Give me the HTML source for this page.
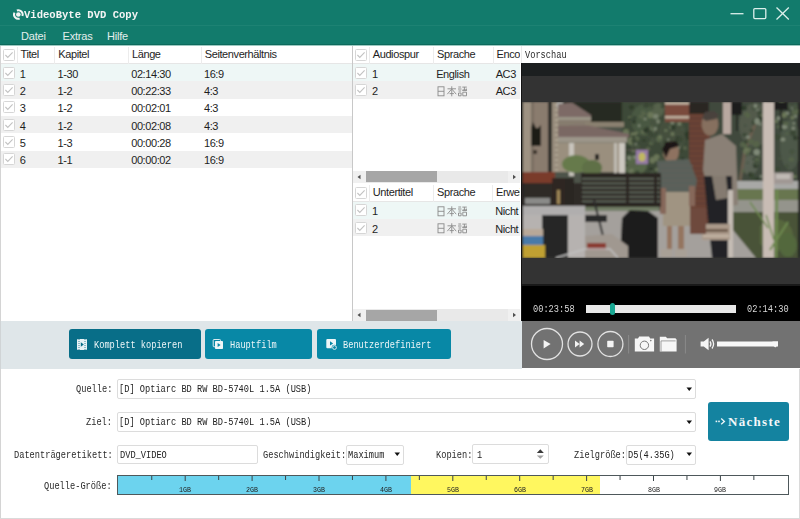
<!DOCTYPE html>
<html><head><meta charset="utf-8"><style>
html,body{margin:0;padding:0;}
body{width:800px;height:519px;position:relative;overflow:hidden;background:#fff;font-family:"Liberation Sans",sans-serif;}
.r{position:absolute;}
.t{position:absolute;white-space:pre;line-height:normal;}
svg{display:block;}
</style></head><body>
<div class="r" style="left:0px;top:0px;width:800px;height:25px;background:#127b6c;"></div>
<div class="r" style="left:0px;top:25px;width:800px;height:1px;background:#1d8273;"></div>
<div class="r" style="left:0px;top:26px;width:800px;height:18.5px;background:#127b6c;"></div>
<div class="r" style="left:0px;top:44px;width:800px;height:1px;background:#0c6a5c;"></div>
<div class="r" style="left:0px;top:45px;width:800px;height:1px;background:#9cc9c1;"></div>
<svg class="r" style="left:12px;top:9px" width="13" height="13" viewBox="0 0 13 13"><path d="M4.87 1.46 A4.3 4.3 0 0 1 10.39 6.97" fill="none" stroke="#f4f4f4" stroke-width="2"/><path d="M2.45 3.68 A4.3 4.3 0 0 0 7.68 9.6" fill="none" stroke="#f4f4f4" stroke-width="2"/><circle cx="6.35" cy="5.5" r="2.3" fill="#f4f4f4"/></svg>
<div class="t" style="left:24.30px;top:7.63px;font-family:'Liberation Mono',monospace;font-size:11.5px;color:#f4f4f4;transform:scaleX(0.9174);transform-origin:0 0;font-weight:700;">VideoByte DVD Copy</div>
<svg class="r" style="left:725px;top:0" width="75" height="25" viewBox="0 0 75 25"><line x1="5.5" y1="13.7" x2="18.5" y2="13.7" stroke="#dcefeb" stroke-width="1.3"/><rect x="28.8" y="8.6" width="12" height="10" rx="1" fill="none" stroke="#dcefeb" stroke-width="1.3"/><path d="M51.5 7.5 L63.8 19.5 M63.8 7.5 L51.5 19.5" stroke="#dcefeb" stroke-width="1.3"/></svg>
<div class="t" style="left:21.00px;top:29.84px;font-family:'Liberation Sans',sans-serif;font-size:11px;color:#e3eeec;letter-spacing:-0.2px;">Datei</div>
<div class="t" style="left:62.50px;top:29.84px;font-family:'Liberation Sans',sans-serif;font-size:11px;color:#e3eeec;letter-spacing:-0.2px;">Extras</div>
<div class="t" style="left:107.00px;top:29.84px;font-family:'Liberation Sans',sans-serif;font-size:11px;color:#e3eeec;letter-spacing:-0.2px;">Hilfe</div>
<div class="r" style="left:0px;top:46px;width:1px;height:473px;background:#d4d4d4;"></div>
<div class="r" style="left:1px;top:46px;width:351px;height:275px;overflow:hidden">
<div class="r" style="left:0px;top:17px;width:351px;height:1px;background:#e6e6e6;"></div>
<svg class="r" style="left:1.5px;top:3px" width="12" height="12" viewBox="0 0 12 12"><rect x="0.5" y="0.5" width="11" height="11" rx="1" fill="#fff" stroke="#d6d6d6"/><path d="M2.4 6.0 L4.8 8.4 L9.6 3.4" fill="none" stroke="#c2c2c2" stroke-width="1.1"/></svg>
<div class="r" style="left:15.5px;top:1px;width:1px;height:17px;background:#ececec;"></div>
<div class="t" style="left:19.50px;top:2.44px;font-family:'Liberation Sans',sans-serif;font-size:11px;color:#1e1e1e;letter-spacing:-0.4px;">Titel</div>
<div class="r" style="left:53.3px;top:1px;width:1px;height:17px;background:#ececec;"></div>
<div class="t" style="left:57.30px;top:2.44px;font-family:'Liberation Sans',sans-serif;font-size:11px;color:#1e1e1e;letter-spacing:-0.4px;">Kapitel</div>
<div class="r" style="left:127px;top:1px;width:1px;height:17px;background:#ececec;"></div>
<div class="t" style="left:131.00px;top:2.44px;font-family:'Liberation Sans',sans-serif;font-size:11px;color:#1e1e1e;letter-spacing:-0.4px;">Länge</div>
<div class="r" style="left:199.75px;top:1px;width:1px;height:17px;background:#ececec;"></div>
<div class="t" style="left:203.75px;top:2.44px;font-family:'Liberation Sans',sans-serif;font-size:11px;color:#1e1e1e;letter-spacing:-0.4px;">Seitenverhältnis</div>
<div class="r" style="left:0px;top:18.0px;width:351px;height:17.333px;background:#eef7f6;"></div>
<svg class="r" style="left:1.5px;top:20.7px" width="12" height="12" viewBox="0 0 12 12"><rect x="0.5" y="0.5" width="11" height="11" rx="1" fill="#fff" stroke="#d6d6d6"/><path d="M2.4 6.0 L4.8 8.4 L9.6 3.4" fill="none" stroke="#c2c2c2" stroke-width="1.1"/></svg>
<div class="t" style="left:18.70px;top:21.79px;font-family:'Liberation Sans',sans-serif;font-size:11px;color:#1e1e1e;letter-spacing:-0.4px;">1</div>
<div class="t" style="left:56.50px;top:21.79px;font-family:'Liberation Sans',sans-serif;font-size:11px;color:#1e1e1e;letter-spacing:-0.4px;">1-30</div>
<div class="t" style="left:130.20px;top:21.79px;font-family:'Liberation Sans',sans-serif;font-size:11px;color:#1e1e1e;letter-spacing:-0.4px;">02:14:30</div>
<div class="t" style="left:202.95px;top:21.79px;font-family:'Liberation Sans',sans-serif;font-size:11px;color:#1e1e1e;letter-spacing:-0.4px;">16:9</div>
<div class="r" style="left:0px;top:35.333px;width:351px;height:17.333px;background:#f0f0f0;"></div>
<svg class="r" style="left:1.5px;top:38.033px" width="12" height="12" viewBox="0 0 12 12"><rect x="0.5" y="0.5" width="11" height="11" rx="1" fill="#fff" stroke="#d6d6d6"/><path d="M2.4 6.0 L4.8 8.4 L9.6 3.4" fill="none" stroke="#c2c2c2" stroke-width="1.1"/></svg>
<div class="t" style="left:18.70px;top:39.12px;font-family:'Liberation Sans',sans-serif;font-size:11px;color:#1e1e1e;letter-spacing:-0.4px;">2</div>
<div class="t" style="left:56.50px;top:39.12px;font-family:'Liberation Sans',sans-serif;font-size:11px;color:#1e1e1e;letter-spacing:-0.4px;">1-2</div>
<div class="t" style="left:130.20px;top:39.12px;font-family:'Liberation Sans',sans-serif;font-size:11px;color:#1e1e1e;letter-spacing:-0.4px;">00:22:33</div>
<div class="t" style="left:202.95px;top:39.12px;font-family:'Liberation Sans',sans-serif;font-size:11px;color:#1e1e1e;letter-spacing:-0.4px;">4:3</div>
<div class="r" style="left:0px;top:52.666px;width:351px;height:17.333px;background:#ffffff;"></div>
<svg class="r" style="left:1.5px;top:55.366px" width="12" height="12" viewBox="0 0 12 12"><rect x="0.5" y="0.5" width="11" height="11" rx="1" fill="#fff" stroke="#d6d6d6"/><path d="M2.4 6.0 L4.8 8.4 L9.6 3.4" fill="none" stroke="#c2c2c2" stroke-width="1.1"/></svg>
<div class="t" style="left:18.70px;top:56.46px;font-family:'Liberation Sans',sans-serif;font-size:11px;color:#1e1e1e;letter-spacing:-0.4px;">3</div>
<div class="t" style="left:56.50px;top:56.46px;font-family:'Liberation Sans',sans-serif;font-size:11px;color:#1e1e1e;letter-spacing:-0.4px;">1-2</div>
<div class="t" style="left:130.20px;top:56.46px;font-family:'Liberation Sans',sans-serif;font-size:11px;color:#1e1e1e;letter-spacing:-0.4px;">00:02:01</div>
<div class="t" style="left:202.95px;top:56.46px;font-family:'Liberation Sans',sans-serif;font-size:11px;color:#1e1e1e;letter-spacing:-0.4px;">4:3</div>
<div class="r" style="left:0px;top:69.999px;width:351px;height:17.333px;background:#f0f0f0;"></div>
<svg class="r" style="left:1.5px;top:72.699px" width="12" height="12" viewBox="0 0 12 12"><rect x="0.5" y="0.5" width="11" height="11" rx="1" fill="#fff" stroke="#d6d6d6"/><path d="M2.4 6.0 L4.8 8.4 L9.6 3.4" fill="none" stroke="#c2c2c2" stroke-width="1.1"/></svg>
<div class="t" style="left:18.70px;top:73.79px;font-family:'Liberation Sans',sans-serif;font-size:11px;color:#1e1e1e;letter-spacing:-0.4px;">4</div>
<div class="t" style="left:56.50px;top:73.79px;font-family:'Liberation Sans',sans-serif;font-size:11px;color:#1e1e1e;letter-spacing:-0.4px;">1-2</div>
<div class="t" style="left:130.20px;top:73.79px;font-family:'Liberation Sans',sans-serif;font-size:11px;color:#1e1e1e;letter-spacing:-0.4px;">00:02:08</div>
<div class="t" style="left:202.95px;top:73.79px;font-family:'Liberation Sans',sans-serif;font-size:11px;color:#1e1e1e;letter-spacing:-0.4px;">4:3</div>
<div class="r" style="left:0px;top:87.332px;width:351px;height:17.333px;background:#ffffff;"></div>
<svg class="r" style="left:1.5px;top:90.032px" width="12" height="12" viewBox="0 0 12 12"><rect x="0.5" y="0.5" width="11" height="11" rx="1" fill="#fff" stroke="#d6d6d6"/><path d="M2.4 6.0 L4.8 8.4 L9.6 3.4" fill="none" stroke="#c2c2c2" stroke-width="1.1"/></svg>
<div class="t" style="left:18.70px;top:91.12px;font-family:'Liberation Sans',sans-serif;font-size:11px;color:#1e1e1e;letter-spacing:-0.4px;">5</div>
<div class="t" style="left:56.50px;top:91.12px;font-family:'Liberation Sans',sans-serif;font-size:11px;color:#1e1e1e;letter-spacing:-0.4px;">1-3</div>
<div class="t" style="left:130.20px;top:91.12px;font-family:'Liberation Sans',sans-serif;font-size:11px;color:#1e1e1e;letter-spacing:-0.4px;">00:00:28</div>
<div class="t" style="left:202.95px;top:91.12px;font-family:'Liberation Sans',sans-serif;font-size:11px;color:#1e1e1e;letter-spacing:-0.4px;">16:9</div>
<div class="r" style="left:0px;top:104.66499999999999px;width:351px;height:17.333px;background:#f0f0f0;"></div>
<svg class="r" style="left:1.5px;top:107.365px" width="12" height="12" viewBox="0 0 12 12"><rect x="0.5" y="0.5" width="11" height="11" rx="1" fill="#fff" stroke="#d6d6d6"/><path d="M2.4 6.0 L4.8 8.4 L9.6 3.4" fill="none" stroke="#c2c2c2" stroke-width="1.1"/></svg>
<div class="t" style="left:18.70px;top:108.46px;font-family:'Liberation Sans',sans-serif;font-size:11px;color:#1e1e1e;letter-spacing:-0.4px;">6</div>
<div class="t" style="left:56.50px;top:108.46px;font-family:'Liberation Sans',sans-serif;font-size:11px;color:#1e1e1e;letter-spacing:-0.4px;">1-1</div>
<div class="t" style="left:130.20px;top:108.46px;font-family:'Liberation Sans',sans-serif;font-size:11px;color:#1e1e1e;letter-spacing:-0.4px;">00:00:02</div>
<div class="t" style="left:202.95px;top:108.46px;font-family:'Liberation Sans',sans-serif;font-size:11px;color:#1e1e1e;letter-spacing:-0.4px;">16:9</div>
</div>
<div class="r" style="left:352px;top:46px;width:1px;height:275px;background:#c8c8c8;"></div>
<div class="r" style="left:353px;top:46px;width:168.5px;height:124.5px;overflow:hidden">
<div class="r" style="left:0px;top:17px;width:167px;height:1px;background:#e6e6e6;"></div>
<svg class="r" style="left:1.5px;top:3px" width="12" height="12" viewBox="0 0 12 12"><rect x="0.5" y="0.5" width="11" height="11" rx="1" fill="#fff" stroke="#d6d6d6"/><path d="M2.4 6.0 L4.8 8.4 L9.6 3.4" fill="none" stroke="#c2c2c2" stroke-width="1.1"/></svg>
<div class="r" style="left:15.75px;top:1px;width:1px;height:17px;background:#ececec;"></div>
<div class="t" style="left:19.75px;top:2.44px;font-family:'Liberation Sans',sans-serif;font-size:11px;color:#1e1e1e;letter-spacing:-0.4px;">Audiospur</div>
<div class="r" style="left:80px;top:1px;width:1px;height:17px;background:#ececec;"></div>
<div class="t" style="left:84.00px;top:2.44px;font-family:'Liberation Sans',sans-serif;font-size:11px;color:#1e1e1e;letter-spacing:-0.4px;">Sprache</div>
<div class="r" style="left:139.5px;top:1px;width:1px;height:17px;background:#ececec;"></div>
<div class="t" style="left:143.50px;top:2.44px;font-family:'Liberation Sans',sans-serif;font-size:11px;color:#1e1e1e;letter-spacing:-0.4px;">Encoding</div>
<div class="r" style="left:0px;top:18.0px;width:167px;height:17.333px;background:#eef7f6;"></div>
<svg class="r" style="left:1.5px;top:20.7px" width="12" height="12" viewBox="0 0 12 12"><rect x="0.5" y="0.5" width="11" height="11" rx="1" fill="#fff" stroke="#d6d6d6"/><path d="M2.4 6.0 L4.8 8.4 L9.6 3.4" fill="none" stroke="#c2c2c2" stroke-width="1.1"/></svg>
<div class="t" style="left:18.95px;top:21.79px;font-family:'Liberation Sans',sans-serif;font-size:11px;color:#1e1e1e;letter-spacing:-0.4px;">1</div>
<div class="t" style="left:83.20px;top:21.79px;font-family:'Liberation Sans',sans-serif;font-size:11px;color:#1e1e1e;letter-spacing:-0.4px;">English</div>
<div class="t" style="left:142.70px;top:21.79px;font-family:'Liberation Sans',sans-serif;font-size:11px;color:#1e1e1e;letter-spacing:-0.4px;">AC3</div>
<div class="r" style="left:0px;top:35.333px;width:167px;height:17.333px;background:#f0f0f0;"></div>
<svg class="r" style="left:1.5px;top:38.033px" width="12" height="12" viewBox="0 0 12 12"><rect x="0.5" y="0.5" width="11" height="11" rx="1" fill="#fff" stroke="#d6d6d6"/><path d="M2.4 6.0 L4.8 8.4 L9.6 3.4" fill="none" stroke="#c2c2c2" stroke-width="1.1"/></svg>
<div class="t" style="left:18.95px;top:39.12px;font-family:'Liberation Sans',sans-serif;font-size:11px;color:#1e1e1e;letter-spacing:-0.4px;">2</div>
<svg class="r" style="left:83.50px;top:39.93px" width="31" height="11" viewBox="0 0 31 11"><g fill="none" stroke="#8a8a8a" stroke-width="0.9"><rect x="1" y="0.8" width="6" height="9"/><path d="M1 5.3 h6"/><path d="M10.5 2.8 h8.5 M14.75 0.3 v10 M14.5 3.2 L10.3 8.2 M15 3.2 L19.2 8.2 M12.6 7.6 h4.3"/><path d="M21.3 1 h2.8 M21 3 h3.5 M21.5 5 h2.6 M21.5 7 h2.6 M21.5 7 v2.8 h2.6 v-2.8 M25.3 1.1 h4.5 M27.4 1.1 v3 M25.7 4.1 h3.8 v-0.2 M29.3 2.5 v1.8 M25.2 4.3 h4.8 M25.8 6.2 h3.7 v3.6 h-3.7 Z"/></g></svg>
<div class="t" style="left:142.70px;top:39.12px;font-family:'Liberation Sans',sans-serif;font-size:11px;color:#1e1e1e;letter-spacing:-0.4px;">AC3</div>
</div>
<div class="r" style="left:353px;top:170.5px;width:168px;height:12px;background:#e9e9e9;"></div>
<div class="r" style="left:353px;top:170.5px;width:12.5px;height:12px;background:#f0f0f0;"></div>
<div class="r" style="left:508px;top:170.5px;width:12.5px;height:12px;background:#f0f0f0;"></div>
<div class="r" style="left:366px;top:171.0px;width:71px;height:11px;background:#a6a6a6;"></div>
<svg class="r" style="left:353px;top:170.5px" width="168" height="12"><path d="M4.5 6 L7.5 3.8 L7.5 8.2 Z" fill="#505050"/><path d="M163 6 L160 3.8 L160 8.2 Z" fill="#505050"/></svg>
<div class="r" style="left:353px;top:182.5px;width:168.5px;height:126.5px;overflow:hidden">
<div class="r" style="left:0px;top:18px;width:167px;height:1px;background:#e6e6e6;"></div>
<svg class="r" style="left:1.5px;top:4px" width="12" height="12" viewBox="0 0 12 12"><rect x="0.5" y="0.5" width="11" height="11" rx="1" fill="#fff" stroke="#d6d6d6"/><path d="M2.4 6.0 L4.8 8.4 L9.6 3.4" fill="none" stroke="#c2c2c2" stroke-width="1.1"/></svg>
<div class="r" style="left:15.75px;top:2px;width:1px;height:17px;background:#ececec;"></div>
<div class="t" style="left:19.75px;top:3.44px;font-family:'Liberation Sans',sans-serif;font-size:11px;color:#1e1e1e;letter-spacing:-0.4px;">Untertitel</div>
<div class="r" style="left:80px;top:2px;width:1px;height:17px;background:#ececec;"></div>
<div class="t" style="left:84.00px;top:3.44px;font-family:'Liberation Sans',sans-serif;font-size:11px;color:#1e1e1e;letter-spacing:-0.4px;">Sprache</div>
<div class="r" style="left:139px;top:2px;width:1px;height:17px;background:#ececec;"></div>
<div class="t" style="left:143.00px;top:3.44px;font-family:'Liberation Sans',sans-serif;font-size:11px;color:#1e1e1e;letter-spacing:-0.4px;">Erweitert</div>
<div class="r" style="left:0px;top:19.0px;width:167px;height:17.333px;background:#eef7f6;"></div>
<svg class="r" style="left:1.5px;top:21.7px" width="12" height="12" viewBox="0 0 12 12"><rect x="0.5" y="0.5" width="11" height="11" rx="1" fill="#fff" stroke="#d6d6d6"/><path d="M2.4 6.0 L4.8 8.4 L9.6 3.4" fill="none" stroke="#c2c2c2" stroke-width="1.1"/></svg>
<div class="t" style="left:18.95px;top:22.79px;font-family:'Liberation Sans',sans-serif;font-size:11px;color:#1e1e1e;letter-spacing:-0.4px;">1</div>
<svg class="r" style="left:83.50px;top:23.60px" width="31" height="11" viewBox="0 0 31 11"><g fill="none" stroke="#8a8a8a" stroke-width="0.9"><rect x="1" y="0.8" width="6" height="9"/><path d="M1 5.3 h6"/><path d="M10.5 2.8 h8.5 M14.75 0.3 v10 M14.5 3.2 L10.3 8.2 M15 3.2 L19.2 8.2 M12.6 7.6 h4.3"/><path d="M21.3 1 h2.8 M21 3 h3.5 M21.5 5 h2.6 M21.5 7 h2.6 M21.5 7 v2.8 h2.6 v-2.8 M25.3 1.1 h4.5 M27.4 1.1 v3 M25.7 4.1 h3.8 v-0.2 M29.3 2.5 v1.8 M25.2 4.3 h4.8 M25.8 6.2 h3.7 v3.6 h-3.7 Z"/></g></svg>
<div class="t" style="left:142.20px;top:22.79px;font-family:'Liberation Sans',sans-serif;font-size:11px;color:#1e1e1e;letter-spacing:-0.4px;">Nicht</div>
<div class="r" style="left:0px;top:36.333px;width:167px;height:17.333px;background:#f0f0f0;"></div>
<svg class="r" style="left:1.5px;top:39.033px" width="12" height="12" viewBox="0 0 12 12"><rect x="0.5" y="0.5" width="11" height="11" rx="1" fill="#fff" stroke="#d6d6d6"/><path d="M2.4 6.0 L4.8 8.4 L9.6 3.4" fill="none" stroke="#c2c2c2" stroke-width="1.1"/></svg>
<div class="t" style="left:18.95px;top:40.12px;font-family:'Liberation Sans',sans-serif;font-size:11px;color:#1e1e1e;letter-spacing:-0.4px;">2</div>
<svg class="r" style="left:83.50px;top:40.93px" width="31" height="11" viewBox="0 0 31 11"><g fill="none" stroke="#8a8a8a" stroke-width="0.9"><rect x="1" y="0.8" width="6" height="9"/><path d="M1 5.3 h6"/><path d="M10.5 2.8 h8.5 M14.75 0.3 v10 M14.5 3.2 L10.3 8.2 M15 3.2 L19.2 8.2 M12.6 7.6 h4.3"/><path d="M21.3 1 h2.8 M21 3 h3.5 M21.5 5 h2.6 M21.5 7 h2.6 M21.5 7 v2.8 h2.6 v-2.8 M25.3 1.1 h4.5 M27.4 1.1 v3 M25.7 4.1 h3.8 v-0.2 M29.3 2.5 v1.8 M25.2 4.3 h4.8 M25.8 6.2 h3.7 v3.6 h-3.7 Z"/></g></svg>
<div class="t" style="left:142.20px;top:40.12px;font-family:'Liberation Sans',sans-serif;font-size:11px;color:#1e1e1e;letter-spacing:-0.4px;">Nicht</div>
</div>
<div class="r" style="left:353px;top:309px;width:168px;height:12px;background:#e9e9e9;"></div>
<div class="r" style="left:353px;top:309px;width:12.5px;height:12px;background:#f0f0f0;"></div>
<div class="r" style="left:508px;top:309px;width:12.5px;height:12px;background:#f0f0f0;"></div>
<div class="r" style="left:366px;top:309.5px;width:71px;height:11px;background:#a6a6a6;"></div>
<svg class="r" style="left:353px;top:309px" width="168" height="12"><path d="M4.5 6 L7.5 3.8 L7.5 8.2 Z" fill="#505050"/><path d="M163 6 L160 3.8 L160 8.2 Z" fill="#505050"/></svg>
<div class="r" style="left:520px;top:46px;width:1px;height:275px;background:#ffffff;"></div>
<div class="r" style="left:521px;top:46px;width:1px;height:17px;background:#ebebeb;"></div>
<div class="r" style="left:521px;top:63px;width:1px;height:258px;background:#141414;"></div>
<div class="t" style="left:525.30px;top:48.54px;font-family:'Liberation Mono',monospace;font-size:11px;color:#2a2a2a;transform:scaleX(0.7879);transform-origin:0 0;">Vorschau</div>
<div class="r" style="left:522px;top:63px;width:278px;height:13px;background:#1c1f20;"></div>
<div class="r" style="left:522px;top:76px;width:278px;height:26px;background:#333333;"></div>
<svg class="r" style="left:522px;top:102px" width="278" height="156" viewBox="522 102 278 156"><defs><filter id="bl" x="522" y="102" width="278" height="156" filterUnits="userSpaceOnUse"><feGaussianBlur stdDeviation="0.8"/></filter></defs><rect x="522" y="102" width="278" height="156" fill="#3a3a36"/><g filter="url(#bl)"><rect x="522" y="102" width="278" height="156" fill="#4e5248" /><rect x="523" y="102" width="35" height="70" fill="#8a7c6e" /><rect x="523" y="102" width="8" height="70" fill="#9e9282" /><rect x="531" y="102" width="3" height="70" fill="#7a6e62" /><rect x="548" y="102" width="4" height="70" fill="#2c2a27" /><rect x="552" y="102" width="6" height="70" fill="#968b7c" /><rect x="555" y="104" width="3" height="2" fill="#b0a694" /><rect x="555" y="109" width="3" height="2" fill="#b0a694" /><rect x="555" y="114" width="3" height="2" fill="#b0a694" /><rect x="555" y="119" width="3" height="2" fill="#b0a694" /><rect x="555" y="124" width="3" height="2" fill="#b0a694" /><rect x="555" y="129" width="3" height="2" fill="#b0a694" /><rect x="555" y="134" width="3" height="2" fill="#b0a694" /><rect x="555" y="139" width="3" height="2" fill="#b0a694" /><rect x="555" y="144" width="3" height="2" fill="#b0a694" /><rect x="555" y="149" width="3" height="2" fill="#b0a694" /><rect x="555" y="154" width="3" height="2" fill="#b0a694" /><rect x="555" y="159" width="3" height="2" fill="#b0a694" /><rect x="555" y="164" width="3" height="2" fill="#b0a694" /><rect x="555" y="169" width="3" height="2" fill="#b0a694" /><polygon points="531,128 533,122 536,128 538,128 541,125 541,146 531,146" fill="#1e1a18" /><rect x="533" y="150" width="4" height="4" fill="#3a302a" /><rect x="558" y="102" width="67" height="24" fill="#262a24" /><rect x="622" y="102" width="68" height="78" fill="#3e4a38" /><ellipse cx="645" cy="120" rx="14" ry="16" fill="#4a5842" /><ellipse cx="672" cy="135" rx="14" ry="18" fill="#44503e" /><ellipse cx="635" cy="165" rx="12" ry="10" fill="#566648" /><ellipse cx="658" cy="110" rx="6" ry="7" fill="#56624c" /><ellipse cx="646.1" cy="114.3" rx="2.5" ry="1.8" fill="#465240" /><ellipse cx="631.8" cy="146.7" rx="3.0" ry="2.4" fill="#2e3a2a" /><ellipse cx="652.9" cy="108.2" rx="1.4" ry="1.3" fill="#465240" /><ellipse cx="633.7" cy="119.7" rx="2.5" ry="2.9" fill="#465240" /><ellipse cx="662.3" cy="106.7" rx="1.6" ry="1.6" fill="#3a4634" /><ellipse cx="644.0" cy="113.8" rx="1.4" ry="1.2" fill="#7a8470" /><ellipse cx="637.2" cy="146.6" rx="2.5" ry="2.2" fill="#465240" /><ellipse cx="670.2" cy="145.3" rx="2.4" ry="2.3" fill="#465240" /><ellipse cx="652.5" cy="126.6" rx="2.4" ry="2.2" fill="#56644a" /><ellipse cx="641.4" cy="116.5" rx="2.8" ry="2.0" fill="#56644a" /><ellipse cx="658.6" cy="168.6" rx="2.7" ry="2.2" fill="#2e3a2a" /><ellipse cx="633.3" cy="134.4" rx="2.7" ry="2.1" fill="#6a7658" /><ellipse cx="652.1" cy="175.2" rx="1.4" ry="1.3" fill="#56644a" /><ellipse cx="647.1" cy="129.3" rx="2.2" ry="2.4" fill="#2e3a2a" /><ellipse cx="678.1" cy="173.9" rx="2.1" ry="2.2" fill="#2e3a2a" /><ellipse cx="671.3" cy="126.2" rx="2.4" ry="2.5" fill="#6a7658" /><ellipse cx="643.6" cy="131.9" rx="2.5" ry="1.8" fill="#6a7658" /><ellipse cx="648.0" cy="148.8" rx="2.2" ry="1.8" fill="#56644a" /><ellipse cx="634.0" cy="121.6" rx="2.0" ry="2.3" fill="#2e3a2a" /><ellipse cx="636.3" cy="133.1" rx="1.8" ry="1.3" fill="#6a7658" /><ellipse cx="679.6" cy="123.9" rx="2.0" ry="1.8" fill="#6a7658" /><ellipse cx="685.4" cy="114.3" rx="1.6" ry="1.3" fill="#3a4634" /><ellipse cx="626.7" cy="165.3" rx="1.6" ry="1.3" fill="#3a4634" /><ellipse cx="652.0" cy="130.7" rx="2.3" ry="2.7" fill="#7a8470" /><ellipse cx="679.3" cy="174.3" rx="2.5" ry="2.7" fill="#6a7658" /><ellipse cx="681.8" cy="161.5" rx="2.9" ry="3.2" fill="#6a7658" /><ellipse cx="650.7" cy="132.6" rx="2.2" ry="1.9" fill="#3a4634" /><ellipse cx="630.2" cy="118.7" rx="1.5" ry="1.3" fill="#2e3a2a" /><ellipse cx="632.3" cy="145.5" rx="2.3" ry="2.7" fill="#465240" /><ellipse cx="627.6" cy="168.6" rx="2.4" ry="1.9" fill="#56644a" /><ellipse cx="685.2" cy="148.2" rx="2.1" ry="1.6" fill="#6a7658" /><ellipse cx="687.6" cy="137.9" rx="2.2" ry="1.6" fill="#2e3a2a" /><ellipse cx="672.5" cy="158.5" rx="2.2" ry="2.3" fill="#465240" /><ellipse cx="627.4" cy="174.3" rx="2.3" ry="1.7" fill="#465240" /><ellipse cx="682.7" cy="159.9" rx="1.8" ry="1.8" fill="#2e3a2a" /><ellipse cx="669.2" cy="122.6" rx="1.9" ry="1.5" fill="#3a4634" /><ellipse cx="659.0" cy="161.4" rx="1.9" ry="1.5" fill="#3a4634" /><ellipse cx="676.0" cy="164.4" rx="2.7" ry="2.2" fill="#465240" /><ellipse cx="656.6" cy="157.8" rx="3.2" ry="3.5" fill="#6a7658" /><ellipse cx="642.1" cy="154.9" rx="3.1" ry="2.9" fill="#7a8470" /><ellipse cx="687.3" cy="174.6" rx="1.9" ry="1.6" fill="#3a4634" /><ellipse cx="655.1" cy="128.3" rx="2.2" ry="2.6" fill="#465240" /><ellipse cx="678.1" cy="139.0" rx="2.5" ry="2.8" fill="#2e3a2a" /><ellipse cx="677.7" cy="112.0" rx="2.0" ry="2.1" fill="#3a4634" /><ellipse cx="655.6" cy="116.4" rx="2.8" ry="2.4" fill="#7a8470" /><ellipse cx="650.5" cy="133.1" rx="3.1" ry="3.3" fill="#3a4634" /><ellipse cx="687.6" cy="105.1" rx="2.4" ry="2.2" fill="#7a8470" /><ellipse cx="635.1" cy="165.0" rx="3.2" ry="3.3" fill="#56644a" /><ellipse cx="635.7" cy="144.1" rx="1.2" ry="1.4" fill="#7a8470" /><ellipse cx="666.3" cy="142.5" rx="3.1" ry="2.8" fill="#3a4634" /><ellipse cx="677.2" cy="118.8" rx="1.7" ry="1.4" fill="#3a4634" /><ellipse cx="673.3" cy="127.4" rx="2.3" ry="2.6" fill="#2e3a2a" /><ellipse cx="682.4" cy="129.5" rx="2.1" ry="2.1" fill="#465240" /><ellipse cx="652.1" cy="171.8" rx="2.2" ry="2.1" fill="#465240" /><ellipse cx="657.7" cy="168.5" rx="2.8" ry="2.8" fill="#3a4634" /><ellipse cx="636.7" cy="138.5" rx="2.7" ry="2.6" fill="#56644a" /><ellipse cx="668.3" cy="142.8" rx="2.2" ry="2.4" fill="#465240" /><ellipse cx="629.5" cy="117.3" rx="1.3" ry="1.0" fill="#6a7658" /><ellipse cx="660.8" cy="160.0" rx="3.0" ry="2.8" fill="#465240" /><ellipse cx="686.3" cy="148.5" rx="1.6" ry="1.3" fill="#465240" /><ellipse cx="659.1" cy="138.9" rx="3.1" ry="3.2" fill="#56644a" /><ellipse cx="683.2" cy="170.0" rx="1.6" ry="1.5" fill="#6a7658" /><ellipse cx="633.5" cy="136.2" rx="1.3" ry="1.1" fill="#2e3a2a" /><ellipse cx="639.2" cy="125.7" rx="1.4" ry="1.6" fill="#7a8470" /><ellipse cx="665.9" cy="130.5" rx="1.7" ry="1.3" fill="#6a7658" /><ellipse cx="639.6" cy="174.4" rx="2.0" ry="1.9" fill="#7a8470" /><ellipse cx="677.6" cy="115.1" rx="2.1" ry="2.0" fill="#56644a" /><ellipse cx="652.1" cy="129.7" rx="1.4" ry="1.2" fill="#56644a" /><ellipse cx="660.4" cy="136.0" rx="1.2" ry="1.1" fill="#465240" /><ellipse cx="644.3" cy="175.1" rx="1.4" ry="1.7" fill="#3a4634" /><ellipse cx="686.2" cy="110.9" rx="1.7" ry="1.2" fill="#3a4634" /><ellipse cx="642.8" cy="112.7" rx="2.0" ry="2.4" fill="#56644a" /><ellipse cx="651.2" cy="143.2" rx="2.2" ry="2.1" fill="#56644a" /><ellipse cx="631.5" cy="107.3" rx="2.6" ry="2.4" fill="#2e3a2a" /><ellipse cx="642.7" cy="104.3" rx="1.4" ry="1.1" fill="#465240" /><ellipse cx="679.1" cy="108.0" rx="2.9" ry="2.7" fill="#56644a" /><ellipse cx="687.6" cy="134.3" rx="3.0" ry="3.1" fill="#2e3a2a" /><ellipse cx="658.7" cy="120.9" rx="1.4" ry="1.1" fill="#2e3a2a" /><ellipse cx="637.2" cy="172.9" rx="2.5" ry="2.4" fill="#3a4634" /><ellipse cx="644.0" cy="140.5" rx="1.6" ry="1.4" fill="#2e3a2a" /><ellipse cx="687.7" cy="105.8" rx="1.2" ry="1.2" fill="#3a4634" /><ellipse cx="657.9" cy="121.4" rx="2.1" ry="2.2" fill="#7a8470" /><ellipse cx="652.8" cy="140.1" rx="2.9" ry="2.6" fill="#465240" /><ellipse cx="645.1" cy="119.1" rx="1.7" ry="1.3" fill="#7a8470" /><ellipse cx="671.2" cy="113.5" rx="3.2" ry="3.8" fill="#3a4634" /><ellipse cx="626.9" cy="149.9" rx="3.0" ry="2.7" fill="#2e3a2a" /><ellipse cx="631.2" cy="166.1" rx="2.9" ry="3.0" fill="#56644a" /><ellipse cx="663.1" cy="155.0" rx="1.3" ry="1.0" fill="#56644a" /><ellipse cx="653.6" cy="122.7" rx="3.1" ry="3.7" fill="#465240" /><ellipse cx="646.1" cy="105.6" rx="3.0" ry="2.4" fill="#3a4634" /><ellipse cx="626.1" cy="131.6" rx="2.1" ry="2.0" fill="#3a4634" /><ellipse cx="641.4" cy="161.2" rx="1.4" ry="1.5" fill="#3a4634" /><ellipse cx="650.8" cy="106.1" rx="1.2" ry="1.1" fill="#3a4634" /><ellipse cx="631.2" cy="174.8" rx="2.9" ry="2.3" fill="#7a8470" /><ellipse cx="674.6" cy="147.7" rx="2.7" ry="2.9" fill="#6a7658" /><ellipse cx="635.3" cy="157.3" rx="2.5" ry="1.8" fill="#7a8470" /><ellipse cx="681.3" cy="150.0" rx="2.7" ry="3.0" fill="#3a4634" /><ellipse cx="682.4" cy="159.5" rx="2.3" ry="2.6" fill="#2e3a2a" /><ellipse cx="677.2" cy="146.8" rx="3.0" ry="3.1" fill="#7a8470" /><ellipse cx="665.9" cy="109.4" rx="1.3" ry="1.3" fill="#2e3a2a" /><ellipse cx="649.4" cy="136.9" rx="1.3" ry="0.9" fill="#465240" /><ellipse cx="668.2" cy="139.7" rx="1.2" ry="1.3" fill="#7a8470" /><ellipse cx="683.8" cy="170.3" rx="1.4" ry="1.3" fill="#7a8470" /><ellipse cx="671.7" cy="121.9" rx="1.3" ry="1.1" fill="#7a8470" /><ellipse cx="672.9" cy="120.3" rx="2.5" ry="2.3" fill="#6a7658" /><ellipse cx="630.8" cy="171.3" rx="1.8" ry="1.3" fill="#7a8470" /><ellipse cx="665.9" cy="108.8" rx="1.5" ry="1.2" fill="#7a8470" /><ellipse cx="669.0" cy="149.6" rx="1.5" ry="1.4" fill="#6a7658" /><ellipse cx="642.7" cy="153.4" rx="2.6" ry="2.7" fill="#56644a" /><ellipse cx="669.9" cy="124.4" rx="2.1" ry="2.3" fill="#465240" /><ellipse cx="638.4" cy="176.4" rx="3.1" ry="2.2" fill="#6a7658" /><ellipse cx="630.7" cy="141.0" rx="3.2" ry="3.8" fill="#6a7658" /><ellipse cx="639.0" cy="173.9" rx="1.6" ry="1.6" fill="#3a4634" /><ellipse cx="672.3" cy="122.6" rx="1.9" ry="1.9" fill="#7a8470" /><ellipse cx="657.5" cy="169.5" rx="2.6" ry="2.1" fill="#6a7658" /><ellipse cx="650.4" cy="114.9" rx="3.1" ry="3.2" fill="#6a7658" /><ellipse cx="644.7" cy="113.6" rx="1.9" ry="1.6" fill="#56644a" /><ellipse cx="626.1" cy="159.3" rx="2.9" ry="2.2" fill="#3a4634" /><ellipse cx="670.2" cy="170.6" rx="1.8" ry="1.6" fill="#6a7658" /><ellipse cx="650.2" cy="168.2" rx="1.4" ry="1.6" fill="#56644a" /><ellipse cx="679.0" cy="124.0" rx="1.3" ry="1.3" fill="#7a8470" /><ellipse cx="684.0" cy="121.7" rx="1.7" ry="1.7" fill="#3a4634" /><ellipse cx="673.9" cy="161.9" rx="2.1" ry="1.5" fill="#7a8470" /><ellipse cx="650.8" cy="168.7" rx="2.3" ry="1.9" fill="#2e3a2a" /><ellipse cx="629.1" cy="157.9" rx="2.1" ry="2.3" fill="#7a8470" /><ellipse cx="679.9" cy="139.4" rx="3.0" ry="2.9" fill="#3a4634" /><ellipse cx="655.3" cy="128.8" rx="1.8" ry="1.9" fill="#7a8470" /><ellipse cx="642.1" cy="152.2" rx="1.8" ry="1.8" fill="#6a7658" /><ellipse cx="633.4" cy="151.2" rx="1.4" ry="1.3" fill="#6a7658" /><ellipse cx="660.1" cy="137.0" rx="1.9" ry="2.0" fill="#6a7658" /><ellipse cx="634.7" cy="117.4" rx="1.4" ry="1.2" fill="#2e3a2a" /><ellipse cx="645.8" cy="130.6" rx="2.8" ry="2.3" fill="#2e3a2a" /><ellipse cx="672.5" cy="134.0" rx="2.0" ry="2.0" fill="#6a7658" /><ellipse cx="642.8" cy="159.4" rx="2.2" ry="2.2" fill="#56644a" /><ellipse cx="633.8" cy="140.8" rx="2.5" ry="2.8" fill="#3a4634" /><ellipse cx="631.7" cy="170.3" rx="2.0" ry="2.0" fill="#6a7658" /><ellipse cx="685.1" cy="166.7" rx="2.9" ry="2.1" fill="#2e3a2a" /><ellipse cx="652.4" cy="160.3" rx="2.8" ry="3.3" fill="#6a7658" /><ellipse cx="626.0" cy="132.4" rx="3.1" ry="3.4" fill="#6a7658" /><ellipse cx="686.3" cy="121.6" rx="1.4" ry="1.1" fill="#465240" /><rect x="557" y="102" width="6" height="6" fill="#b8b8b4" /><polygon points="558,104 572,102.5 591,115 591,118 558,118" fill="#7d6a66" /><rect x="558" y="117" width="33" height="3" fill="#9a9486" /><rect x="558" y="120" width="33" height="6" fill="#867c6e" /><rect x="585" y="122" width="39" height="5" fill="#8a8070" /><polygon points="558,126 588,125.5 629,134 629,137.5 558,137.5" fill="#7a6764" /><rect x="558" y="137" width="69" height="5.5" fill="#9c968a" /><rect x="558" y="142.5" width="67" height="29.5" fill="#9a8f7e" /><rect x="569" y="143" width="5" height="33" fill="#c8c4bc" /><rect x="614" y="143" width="3" height="33" fill="#c0bcb4" /><rect x="619" y="143" width="6" height="33" fill="#ccc8c0" /><ellipse cx="576" cy="164" rx="14" ry="9" fill="#667a4c" /><ellipse cx="592" cy="168" rx="10" ry="8" fill="#5e7046" /><rect x="595" y="154" width="4" height="6" fill="#1e1e1c" /><polyline points="625,150 650,150" fill="none" stroke="#6a6058" stroke-width="1" /><rect x="636" y="150" width="12" height="14" fill="#957aa6" /><ellipse cx="642" cy="157" rx="3.5" ry="4.5" fill="#c0b860" /><rect x="688" y="102" width="36" height="14" fill="#2a2824" /><rect x="665" y="102" width="24" height="20" fill="#7a4c3e" /><rect x="665" y="102" width="24" height="2.5" fill="#c8baa8" /><rect x="665" y="116" width="24" height="2.5" fill="#c0b2a0" /><rect x="709" y="102" width="89" height="81" fill="#404a3e" /><ellipse cx="755" cy="125" rx="16" ry="22" fill="#525a4c" /><ellipse cx="790" cy="145" rx="10" ry="25" fill="#4e5848" /><ellipse cx="725" cy="160" rx="10" ry="15" fill="#4a5444" /><ellipse cx="750" cy="165" rx="8" ry="10" fill="#5a6254" /><polyline points="740,181 745,150 756,122" fill="none" stroke="#6a5e50" stroke-width="3" /><ellipse cx="795.5" cy="111.4" rx="2.9" ry="3.0" fill="#6a7658" /><ellipse cx="747.6" cy="162.8" rx="1.2" ry="0.9" fill="#465240" /><ellipse cx="792.7" cy="152.7" rx="1.8" ry="1.4" fill="#56644a" /><ellipse cx="771.5" cy="136.7" rx="2.7" ry="2.0" fill="#56644a" /><ellipse cx="771.3" cy="147.9" rx="2.0" ry="1.6" fill="#465240" /><ellipse cx="743.1" cy="144.4" rx="3.2" ry="2.7" fill="#56644a" /><ellipse cx="777.8" cy="171.1" rx="2.2" ry="1.8" fill="#3a4634" /><ellipse cx="744.6" cy="134.7" rx="2.5" ry="1.8" fill="#3a4634" /><ellipse cx="769.9" cy="154.9" rx="2.0" ry="1.7" fill="#808a78" /><ellipse cx="765.9" cy="131.5" rx="2.2" ry="2.3" fill="#808a78" /><ellipse cx="765.7" cy="155.6" rx="1.6" ry="1.8" fill="#808a78" /><ellipse cx="788.6" cy="108.2" rx="2.2" ry="1.8" fill="#3a4634" /><ellipse cx="755.5" cy="120.1" rx="2.7" ry="2.3" fill="#465240" /><ellipse cx="769.8" cy="117.4" rx="1.6" ry="1.5" fill="#808a78" /><ellipse cx="746.0" cy="148.8" rx="3.0" ry="2.2" fill="#2e3a2a" /><ellipse cx="795.6" cy="113.9" rx="1.3" ry="1.0" fill="#6a7658" /><ellipse cx="767.3" cy="157.8" rx="1.8" ry="1.4" fill="#2e3a2a" /><ellipse cx="793.3" cy="128.4" rx="1.6" ry="1.8" fill="#808a78" /><ellipse cx="768.3" cy="127.0" rx="2.7" ry="3.0" fill="#56644a" /><ellipse cx="766.9" cy="111.4" rx="1.4" ry="1.0" fill="#6a7658" /><ellipse cx="794.6" cy="112.5" rx="3.1" ry="2.5" fill="#56644a" /><ellipse cx="784.5" cy="126.8" rx="2.8" ry="2.1" fill="#808a78" /><ellipse cx="768.6" cy="131.7" rx="3.0" ry="2.4" fill="#56644a" /><ellipse cx="782.8" cy="139.5" rx="2.5" ry="2.0" fill="#808a78" /><ellipse cx="784.4" cy="106.1" rx="1.3" ry="0.9" fill="#2e3a2a" /><ellipse cx="756.9" cy="160.5" rx="3.0" ry="2.6" fill="#56644a" /><ellipse cx="761.1" cy="176.4" rx="1.3" ry="1.4" fill="#808a78" /><ellipse cx="760.1" cy="124.2" rx="1.2" ry="1.3" fill="#808a78" /><ellipse cx="794.1" cy="108.0" rx="2.9" ry="2.1" fill="#808a78" /><ellipse cx="794.7" cy="176.5" rx="2.0" ry="1.6" fill="#6a7658" /><ellipse cx="787.0" cy="113.2" rx="2.2" ry="1.5" fill="#808a78" /><ellipse cx="759.4" cy="156.3" rx="1.5" ry="1.2" fill="#56644a" /><ellipse cx="767.9" cy="163.4" rx="2.4" ry="2.3" fill="#6a7658" /><ellipse cx="783.7" cy="122.0" rx="1.3" ry="1.0" fill="#465240" /><ellipse cx="772.4" cy="115.4" rx="2.1" ry="1.5" fill="#2e3a2a" /><ellipse cx="757.3" cy="109.5" rx="1.4" ry="1.3" fill="#808a78" /><ellipse cx="795.5" cy="116.3" rx="1.5" ry="1.4" fill="#808a78" /><ellipse cx="755.7" cy="144.5" rx="2.7" ry="3.0" fill="#56644a" /><ellipse cx="758.9" cy="146.7" rx="1.9" ry="2.1" fill="#3a4634" /><ellipse cx="766.7" cy="117.3" rx="1.7" ry="1.4" fill="#465240" /><ellipse cx="753.2" cy="108.0" rx="1.7" ry="1.4" fill="#465240" /><ellipse cx="755.5" cy="165.3" rx="2.5" ry="3.0" fill="#2e3a2a" /><ellipse cx="743.2" cy="171.0" rx="1.7" ry="1.5" fill="#56644a" /><ellipse cx="745.2" cy="125.6" rx="1.4" ry="1.1" fill="#465240" /><ellipse cx="753.5" cy="108.8" rx="2.2" ry="1.8" fill="#465240" /><ellipse cx="757.0" cy="162.9" rx="3.1" ry="2.3" fill="#465240" /><ellipse cx="781.3" cy="129.9" rx="1.3" ry="1.1" fill="#2e3a2a" /><ellipse cx="754.0" cy="122.6" rx="2.4" ry="2.5" fill="#3a4634" /><ellipse cx="787.0" cy="166.1" rx="2.0" ry="1.8" fill="#465240" /><ellipse cx="759.9" cy="118.7" rx="2.8" ry="2.7" fill="#2e3a2a" /><ellipse cx="765.0" cy="164.3" rx="2.5" ry="2.0" fill="#465240" /><ellipse cx="747.9" cy="115.6" rx="2.6" ry="2.3" fill="#56644a" /><ellipse cx="779.1" cy="135.2" rx="1.3" ry="1.4" fill="#56644a" /><ellipse cx="765.4" cy="104.4" rx="2.7" ry="3.0" fill="#808a78" /><ellipse cx="753.6" cy="159.1" rx="1.6" ry="1.1" fill="#3a4634" /><ellipse cx="765.9" cy="166.2" rx="2.0" ry="2.3" fill="#6a7658" /><ellipse cx="784.7" cy="113.0" rx="1.3" ry="1.0" fill="#6a7658" /><ellipse cx="747.8" cy="150.9" rx="1.9" ry="1.8" fill="#3a4634" /><ellipse cx="761.8" cy="115.5" rx="1.5" ry="1.1" fill="#6a7658" /><ellipse cx="769.5" cy="165.0" rx="3.1" ry="2.5" fill="#3a4634" /><ellipse cx="788.2" cy="106.3" rx="3.0" ry="2.6" fill="#465240" /><ellipse cx="793.0" cy="132.9" rx="3.0" ry="3.0" fill="#3a4634" /><ellipse cx="777.6" cy="169.0" rx="2.4" ry="2.5" fill="#3a4634" /><ellipse cx="787.8" cy="117.1" rx="1.6" ry="1.5" fill="#465240" /><ellipse cx="751.4" cy="130.7" rx="1.5" ry="1.8" fill="#3a4634" /><ellipse cx="745.2" cy="146.3" rx="2.7" ry="2.0" fill="#56644a" /><ellipse cx="749.4" cy="149.2" rx="2.3" ry="2.3" fill="#56644a" /><ellipse cx="778.0" cy="126.7" rx="1.7" ry="1.5" fill="#56644a" /><ellipse cx="767.1" cy="136.8" rx="1.2" ry="1.3" fill="#6a7658" /><ellipse cx="768.1" cy="137.4" rx="2.4" ry="2.7" fill="#3a4634" /><ellipse cx="786.8" cy="133.8" rx="1.3" ry="1.2" fill="#56644a" /><ellipse cx="748.0" cy="137.0" rx="2.2" ry="1.6" fill="#808a78" /><ellipse cx="750.0" cy="174.0" rx="1.8" ry="1.9" fill="#2e3a2a" /><ellipse cx="745.9" cy="141.8" rx="2.0" ry="2.3" fill="#3a4634" /><ellipse cx="744.4" cy="108.1" rx="2.4" ry="2.5" fill="#2e3a2a" /><ellipse cx="753.5" cy="178.6" rx="2.2" ry="2.6" fill="#3a4634" /><ellipse cx="780.1" cy="158.5" rx="1.6" ry="1.8" fill="#465240" /><ellipse cx="783.8" cy="115.2" rx="3.0" ry="2.5" fill="#6a7658" /><ellipse cx="750.8" cy="141.7" rx="3.0" ry="2.4" fill="#56644a" /><ellipse cx="776.3" cy="121.3" rx="1.9" ry="1.6" fill="#6a7658" /><ellipse cx="751.7" cy="175.1" rx="2.6" ry="2.9" fill="#3a4634" /><ellipse cx="785.8" cy="123.4" rx="2.7" ry="2.0" fill="#56644a" /><ellipse cx="795.2" cy="137.9" rx="2.2" ry="2.3" fill="#2e3a2a" /><ellipse cx="756.6" cy="144.2" rx="2.9" ry="3.1" fill="#56644a" /><ellipse cx="757.3" cy="179.3" rx="2.4" ry="2.1" fill="#2e3a2a" /><ellipse cx="766.9" cy="116.6" rx="2.7" ry="1.9" fill="#465240" /><ellipse cx="756.7" cy="152.2" rx="3.2" ry="3.1" fill="#808a78" /><ellipse cx="791.4" cy="159.4" rx="2.7" ry="2.2" fill="#56644a" /><ellipse cx="776.3" cy="136.3" rx="2.2" ry="2.6" fill="#3a4634" /><ellipse cx="769.4" cy="150.2" rx="1.3" ry="0.9" fill="#465240" /><ellipse cx="762.2" cy="111.2" rx="1.9" ry="1.6" fill="#465240" /><ellipse cx="759.3" cy="113.3" rx="1.9" ry="2.2" fill="#3a4634" /><ellipse cx="750.3" cy="175.1" rx="1.7" ry="1.3" fill="#2e3a2a" /><ellipse cx="746.4" cy="114.1" rx="2.5" ry="2.1" fill="#56644a" /><ellipse cx="795.2" cy="107.3" rx="2.8" ry="3.3" fill="#465240" /><ellipse cx="777.9" cy="137.2" rx="3.1" ry="3.3" fill="#3a4634" /><ellipse cx="751.9" cy="103.0" rx="1.3" ry="0.9" fill="#3a4634" /><ellipse cx="755.8" cy="107.5" rx="2.8" ry="1.9" fill="#465240" /><ellipse cx="778.5" cy="118.2" rx="2.0" ry="1.9" fill="#808a78" /><ellipse cx="770.4" cy="152.4" rx="2.8" ry="2.2" fill="#56644a" /><ellipse cx="746.4" cy="151.2" rx="3.2" ry="3.4" fill="#6a7658" /><ellipse cx="781.6" cy="103.5" rx="2.9" ry="3.1" fill="#6a7658" /><ellipse cx="747.3" cy="153.5" rx="1.6" ry="1.9" fill="#56644a" /><ellipse cx="755.5" cy="106.0" rx="1.9" ry="2.0" fill="#808a78" /><ellipse cx="793.9" cy="123.3" rx="1.3" ry="1.3" fill="#808a78" /><ellipse cx="766.5" cy="163.7" rx="2.2" ry="1.9" fill="#808a78" /><ellipse cx="793.1" cy="171.9" rx="1.4" ry="1.3" fill="#3a4634" /><ellipse cx="757.1" cy="121.2" rx="2.7" ry="3.2" fill="#808a78" /><ellipse cx="792.4" cy="117.8" rx="2.0" ry="2.0" fill="#6a7658" /><ellipse cx="792.0" cy="151.6" rx="2.6" ry="2.7" fill="#465240" /><ellipse cx="715.6" cy="173.6" rx="2.6" ry="2.9" fill="#56644a" /><ellipse cx="722.4" cy="149.4" rx="3.0" ry="3.3" fill="#56644a" /><ellipse cx="717.7" cy="143.1" rx="3.0" ry="2.3" fill="#3a4634" /><ellipse cx="710.6" cy="164.9" rx="1.5" ry="1.8" fill="#465240" /><ellipse cx="709.4" cy="141.7" rx="2.6" ry="2.6" fill="#465240" /><ellipse cx="709.9" cy="141.9" rx="2.9" ry="3.1" fill="#3a4634" /><ellipse cx="720.4" cy="172.8" rx="3.0" ry="2.2" fill="#465240" /><ellipse cx="722.2" cy="144.3" rx="1.6" ry="1.2" fill="#3a4634" /><ellipse cx="722.3" cy="176.4" rx="2.7" ry="2.0" fill="#465240" /><ellipse cx="717.9" cy="159.1" rx="1.5" ry="1.6" fill="#465240" /><ellipse cx="711.9" cy="152.8" rx="2.0" ry="1.5" fill="#56644a" /><ellipse cx="722.0" cy="141.9" rx="2.7" ry="3.1" fill="#465240" /><ellipse cx="716.1" cy="174.1" rx="2.4" ry="1.7" fill="#56644a" /><ellipse cx="709.4" cy="160.7" rx="1.4" ry="1.3" fill="#3a4634" /><ellipse cx="716.5" cy="148.7" rx="2.9" ry="2.2" fill="#56644a" /><ellipse cx="711.4" cy="140.1" rx="1.6" ry="1.7" fill="#3a4634" /><ellipse cx="709.1" cy="159.6" rx="2.2" ry="2.4" fill="#3a4634" /><ellipse cx="722.5" cy="163.7" rx="3.1" ry="3.0" fill="#465240" /><ellipse cx="722.2" cy="151.3" rx="1.6" ry="1.7" fill="#56644a" /><ellipse cx="711.3" cy="177.5" rx="2.7" ry="2.6" fill="#465240" /><rect x="689" y="114" width="21" height="114" fill="#6a4236" /><rect x="689" y="118" width="21" height="1" fill="#5a3a30" /><rect x="689" y="123" width="21" height="1" fill="#5a3a30" /><rect x="689" y="128" width="21" height="1" fill="#5a3a30" /><rect x="689" y="133" width="21" height="1" fill="#5a3a30" /><rect x="689" y="138" width="21" height="1" fill="#5a3a30" /><rect x="689" y="143" width="21" height="1" fill="#5a3a30" /><rect x="689" y="148" width="21" height="1" fill="#5a3a30" /><rect x="689" y="153" width="21" height="1" fill="#5a3a30" /><rect x="689" y="158" width="21" height="1" fill="#5a3a30" /><rect x="689" y="163" width="21" height="1" fill="#5a3a30" /><rect x="689" y="168" width="21" height="1" fill="#5a3a30" /><rect x="689" y="173" width="21" height="1" fill="#5a3a30" /><rect x="689" y="178" width="21" height="1" fill="#5a3a30" /><rect x="689" y="183" width="21" height="1" fill="#5a3a30" /><rect x="689" y="188" width="21" height="1" fill="#5a3a30" /><rect x="689" y="193" width="21" height="1" fill="#5a3a30" /><rect x="689" y="198" width="21" height="1" fill="#5a3a30" /><rect x="689" y="203" width="21" height="1" fill="#5a3a30" /><rect x="689" y="208" width="21" height="1" fill="#5a3a30" /><rect x="689" y="213" width="21" height="1" fill="#5a3a30" /><rect x="689" y="218" width="21" height="1" fill="#5a3a30" /><rect x="689" y="223" width="21" height="1" fill="#5a3a30" /><rect x="723" y="102" width="8" height="32" fill="#b8a8a0" /><rect x="731" y="102" width="11" height="13" fill="#1c1c1a" /><polyline points="737,115 737,131" fill="none" stroke="#222" stroke-width="1.8" /><rect x="773" y="102" width="15" height="8" fill="#1c1c1a" /><polyline points="781,110 781,129" fill="none" stroke="#222" stroke-width="1.8" /><rect x="733" y="181" width="65" height="8" fill="#a8a8a6" /><rect x="733" y="189" width="65" height="11" fill="#687650" /><rect x="733" y="200" width="65" height="12" fill="#94948c" /><rect x="733" y="212" width="65" height="46" fill="#4a5238" /><ellipse cx="775" cy="235" rx="18" ry="16" fill="#56663e" /><rect x="773" y="172.5" width="20" height="11.5" fill="#a09894" /><rect x="776" y="174" width="14" height="5" fill="#c0bab4" /><rect x="763" y="102" width="11" height="156" fill="#c8bcb4" /><polygon points="585,211 660,211 690,226 733,222 733,230 756,258 585,258" fill="#a4a09c" /><rect x="733" y="212" width="27" height="46" fill="#4a5238" /><polygon points="733,230 756,258 733,258" fill="#a4a09c" /><polyline points="750,202 768,228" fill="none" stroke="#6e8a50" stroke-width="1.5" /><polyline points="776,258 777,190" fill="none" stroke="#6e8a50" stroke-width="2.5" /><polyline points="770,250 788,222" fill="none" stroke="#6e8a50" stroke-width="2" /><polyline points="774,240 766,215" fill="none" stroke="#6e8a50" stroke-width="1.5" /><ellipse cx="788" cy="245" rx="9" ry="12" fill="#52683e" /><ellipse cx="710" cy="124" rx="8.5" ry="11.5" fill="#86705f" /><polygon points="702,118 705,112 714,111 719,115 716,119 706,121" fill="#4a423c" /><rect x="710" y="133" width="-704" height="-127" fill="#7a6454" /><polygon points="705,140 722,134 736,146 738,205 712,208 703,170" fill="#8a8076" /><polygon points="704,176 732,176 733,258 712,258 708,220" fill="#222426" /><polygon points="712,176 726,176 728,198 716,200" fill="#847a70" /><rect x="728" y="190" width="5" height="68" fill="#c4bcb4" /><rect x="702" y="224" width="28" height="16" fill="#aa9a8a" /><rect x="704" y="229" width="24" height="3" fill="#6e5a4c" /><rect x="703" y="235" width="26" height="2" fill="#c4b6a6" /><ellipse cx="671" cy="152" rx="8" ry="10.5" fill="#8e7260" /><polygon points="662,149 666,142 676,141 680,146 670,149 666,158" fill="#1c1816" /><polygon points="657,161 689,159 697,180 695,193 659,193" fill="#5a605a" /><rect x="661" y="165" width="32" height="1.2" fill="#5e625a" /><rect x="661" y="170" width="32" height="1.2" fill="#5e625a" /><rect x="661" y="175" width="32" height="1.2" fill="#5e625a" /><rect x="661" y="180" width="32" height="1.2" fill="#5e625a" /><rect x="661" y="185" width="32" height="1.2" fill="#5e625a" /><rect x="663" y="192" width="27" height="34" fill="#a09482" /><rect x="660" y="188" width="6" height="26" fill="#86685a" /><rect x="689" y="186" width="6" height="20" fill="#86685a" /><rect x="667" y="226" width="5" height="24" fill="#94745e" /><rect x="678" y="226" width="6" height="24" fill="#94745e" /><rect x="661" y="249" width="11" height="8" fill="#a8a096" /><rect x="675" y="249" width="12" height="8" fill="#a8a096" /><rect x="581" y="173" width="80" height="34" fill="#2a2824" /><rect x="582" y="178" width="78" height="1.6" fill="#646a5e" /><rect x="582" y="182.5" width="78" height="1.6" fill="#646a5e" /><rect x="582" y="187" width="78" height="1.6" fill="#646a5e" /><rect x="582" y="191.5" width="78" height="1.6" fill="#646a5e" /><rect x="582" y="196" width="78" height="1.6" fill="#646a5e" /><rect x="582" y="200.5" width="78" height="1.6" fill="#646a5e" /><rect x="626" y="173" width="3" height="34" fill="#2a2824" /><rect x="654" y="173" width="3" height="34" fill="#2a2824" /><rect x="583" y="207" width="76" height="4" fill="#727e66" /><rect x="690" y="208" width="16" height="26" fill="#6e4a3e" /><rect x="523" y="172" width="32" height="11.5" fill="#7a3a2c" /><rect x="523" y="183" width="58" height="24" fill="#2e2c28" /><rect x="525" y="198" width="25" height="6" fill="#8a8a88" /><rect x="552" y="178" width="13" height="34" fill="#2e2820" /><rect x="565" y="178" width="9" height="29" fill="#2a2622" /><rect x="557" y="190" width="3" height="14" fill="#a08858" /><rect x="523" y="206" width="62" height="9" fill="#b0aeae" /><rect x="523" y="215" width="62" height="43" fill="#b6b2b0" /><rect x="542" y="215" width="26" height="43" fill="#262626" /><rect x="523" y="229" width="20" height="7" fill="#b8a898" /><rect x="523" y="236" width="20" height="9" fill="#4a7aa8" /><rect x="523" y="245" width="22" height="13" fill="#c0a030" /><rect x="585" y="215" width="22" height="7" fill="#2a2a2a" /><polyline points="594,200 603,236" fill="none" stroke="#2a2a2a" stroke-width="2" /><polygon points="622,218 630,210 648,211 658,218 658,258 620,258" fill="#1e1e1c" /><polygon points="585,236 612,234 628,246 628,258 585,258" fill="#a09890" /><rect x="587" y="243" width="19" height="7" fill="#8a3a30" /><polyline points="556,258 585,249 610,249 618,258" fill="none" stroke="#c0c0c0" stroke-width="1.5" /><rect x="522" y="102" width="1" height="156" fill="#111" /><rect x="798" y="102" width="2" height="156" fill="#1a1a1a" /></g></svg>
<div class="r" style="left:522px;top:258px;width:278px;height:26px;background:#333333;"></div>
<div class="r" style="left:522px;top:284px;width:278px;height:2px;background:#191919;"></div>
<div class="r" style="left:522px;top:286px;width:278px;height:35px;background:#000000;"></div>
<div class="t" style="left:533.00px;top:302.84px;font-family:'Liberation Mono',monospace;font-size:11px;color:#d8d8d8;transform:scaleX(0.7879);transform-origin:0 0;">00:23:58</div>
<div class="t" style="left:747.00px;top:302.84px;font-family:'Liberation Mono',monospace;font-size:11px;color:#d8d8d8;transform:scaleX(0.7879);transform-origin:0 0;">02:14:30</div>
<div class="r" style="left:586px;top:305px;width:150px;height:7.5px;background:#e8e8e8;"></div>
<div class="r" style="left:609.6px;top:302.5px;width:5.8px;height:12px;background:#19a893;border-radius:2.5px;"></div>
<div class="r" style="left:521.5px;top:321px;width:278.5px;height:46.5px;background:#727272;"></div>
<svg class="r" style="left:521px;top:321px" width="279" height="47" viewBox="0 0 279 47"><circle cx="26" cy="23" r="15.5" fill="none" stroke="#e2e2e2" stroke-width="1.3"/><path d="M22.6 19 L29.6 23 L22.6 27.4 Z" fill="#f4f4f4"/><circle cx="59" cy="23" r="12" fill="none" stroke="#e2e2e2" stroke-width="1.3"/><path d="M54 19.6 L58.6 23 L54 26.4 Z M58.6 19.6 L63.2 23 L58.6 26.4 Z" fill="#f4f4f4"/><circle cx="89.4" cy="23" r="12.5" fill="none" stroke="#e2e2e2" stroke-width="1.3"/><rect x="86.2" y="19.8" width="6.4" height="6.4" rx="0.6" fill="#f4f4f4"/><line x1="107.6" y1="14" x2="107.6" y2="32.5" stroke="#8a8a8a" stroke-width="1"/><path d="M113.8 17.5 h3.2 l1.2 -2 h9.8 l1.2 2 h3.9 v13 h-19.3 Z" fill="#f6f6f6"/><circle cx="123.4" cy="24.3" r="4.2" fill="none" stroke="#777" stroke-width="1"/><circle cx="129.8" cy="19.6" r="0.8" fill="#777"/><path d="M138.8 15.8 h6 l1.4 1.4 h8.2 l1.2 1.2 v12.1 h-16.8 Z" fill="#f6f6f6"/><path d="M140 30.5 v-10.6 h14.6" fill="none" stroke="#8a8a8a" stroke-width="0.8"/><line x1="164.4" y1="14" x2="164.4" y2="32.5" stroke="#8a8a8a" stroke-width="1"/><path d="M179.6 20.5 h3.2 l4.8 -3.8 v12.6 l-4.8 -3.8 h-3.2 Z" fill="#f4f4f4"/><path d="M189 20.3 q1.8 2.7 0 5.4 M191 18.5 q3.2 4.5 0 9" fill="none" stroke="#f4f4f4" stroke-width="1.3"/><rect x="196" y="20.5" width="61" height="5" fill="#f8f8f8"/><path d="M251.5 20.5 h5.5 v3.5 l-2.75 2.6 l-2.75 -2.6 Z" fill="#f8f8f8"/></svg>
<div class="r" style="left:0px;top:321px;width:521.5px;height:47.5px;background:#dfe6e9;"></div>
<div class="r" style="left:0px;top:321px;width:1px;height:48px;background:#d0d4d6;"></div>
<div class="r" style="left:69px;top:329.3px;width:132px;height:30px;background:#086e88;border-radius:3px;"></div>
<div class="r" style="left:205px;top:329.3px;width:107px;height:30px;background:#0888a6;border-radius:3px;"></div>
<div class="r" style="left:317px;top:329.3px;width:134px;height:30px;background:#0888a6;border-radius:3px;"></div>
<div class="t" style="left:93.60px;top:338.84px;font-family:'Liberation Mono',monospace;font-size:11px;color:#eef6f8;transform:scaleX(0.7879);transform-origin:0 0;">Komplett kopieren</div>
<div class="t" style="left:229.90px;top:338.84px;font-family:'Liberation Mono',monospace;font-size:11px;color:#eef6f8;transform:scaleX(0.7879);transform-origin:0 0;">Hauptfilm</div>
<div class="t" style="left:343.00px;top:338.84px;font-family:'Liberation Mono',monospace;font-size:11px;color:#eef6f8;transform:scaleX(0.7879);transform-origin:0 0;">Benutzerdefiniert</div>
<svg class="r" style="left:76px;top:338px" width="12" height="13" viewBox="0 0 12 13"><rect x="1" y="1" width="10" height="11" rx="1" fill="#e8f2f5"/><path d="M3 1 v11 M9 1 v11" stroke="#086e88" stroke-width="0.8" stroke-dasharray="1 1"/><path d="M4.8 4.2 L7.8 6.5 L4.8 8.8 Z" fill="#086e88"/></svg>
<svg class="r" style="left:212px;top:338px" width="13" height="13" viewBox="0 0 13 13"><rect x="1.2" y="1.5" width="7.3" height="7.3" rx="0.8" fill="none" stroke="#d8eaf0" stroke-width="1"/><rect x="3" y="3" width="8" height="8" rx="0.8" fill="#eef6f8"/><path d="M5.6 4.9 L8.6 7 L5.6 9.1 Z" fill="#0888a6"/></svg>
<svg class="r" style="left:325px;top:338px" width="14" height="13" viewBox="0 0 14 13"><rect x="1.3" y="1" width="9.7" height="9.2" rx="1" fill="#eef6f8"/><path d="M5 3.2 L8.2 5.4 L5 7.6 Z" fill="#0888a6"/><circle cx="9.5" cy="9.5" r="2.8" fill="#0888a6"/><circle cx="9.5" cy="9.5" r="1.9" fill="none" stroke="#d8eaf0" stroke-width="1"/></svg>
<div class="r" style="left:799px;top:369px;width:1px;height:150px;background:#dadada;"></div>
<div class="r" style="left:0px;top:518px;width:800px;height:1px;background:#dadada;"></div>
<div class="t" style="left:75.60px;top:382.84px;font-family:'Liberation Mono',monospace;font-size:11px;color:#2a2a2a;transform:scaleX(0.7879);transform-origin:0 0;">Quelle:</div>
<div class="t" style="left:86.00px;top:415.84px;font-family:'Liberation Mono',monospace;font-size:11px;color:#2a2a2a;transform:scaleX(0.7879);transform-origin:0 0;">Ziel:</div>
<div class="t" style="left:13.50px;top:449.34px;font-family:'Liberation Mono',monospace;font-size:11px;color:#2a2a2a;transform:scaleX(0.7879);transform-origin:0 0;">Datenträgeretikett:</div>
<div class="t" style="left:43.90px;top:479.84px;font-family:'Liberation Mono',monospace;font-size:11px;color:#2a2a2a;transform:scaleX(0.7879);transform-origin:0 0;">Quelle-Größe:</div>
<div class="r" style="left:117px;top:379px;width:579px;height:19.5px;background:#fff;box-sizing:border-box;border:1px solid #dcdcdc;border-radius:2px;"></div>
<svg class="r" style="left:686.3px;top:386.5px" width="8" height="5"><path d="M0.5 0.4 L6 0.4 L3.25 4 Z" fill="#111"/></svg>
<div class="t" style="left:119.00px;top:382.84px;font-family:'Liberation Mono',monospace;font-size:11px;color:#222;transform:scaleX(0.7879);transform-origin:0 0;">[D] Optiarc BD RW BD-5740L 1.5A (USB)</div>
<div class="r" style="left:117px;top:412px;width:579px;height:19.5px;background:#fff;box-sizing:border-box;border:1px solid #dcdcdc;border-radius:2px;"></div>
<svg class="r" style="left:686.3px;top:419.5px" width="8" height="5"><path d="M0.5 0.4 L6 0.4 L3.25 4 Z" fill="#111"/></svg>
<div class="t" style="left:119.00px;top:415.84px;font-family:'Liberation Mono',monospace;font-size:11px;color:#222;transform:scaleX(0.7879);transform-origin:0 0;">[D] Optiarc BD RW BD-5740L 1.5A (USB)</div>
<div class="r" style="left:117px;top:445px;width:140.5px;height:19px;background:#fff;box-sizing:border-box;border:1px solid #dcdcdc;border-radius:2px;"></div>
<div class="t" style="left:119.80px;top:449.34px;font-family:'Liberation Mono',monospace;font-size:11px;color:#222;transform:scaleX(0.7879);transform-origin:0 0;">DVD_VIDEO</div>
<div class="t" style="left:262.80px;top:449.34px;font-family:'Liberation Mono',monospace;font-size:11px;color:#2a2a2a;transform:scaleX(0.7879);transform-origin:0 0;">Geschwindigkeit:</div>
<div class="r" style="left:346px;top:444.5px;width:57.5px;height:20px;background:#fff;box-sizing:border-box;border:1px solid #dcdcdc;border-radius:2px;"></div>
<svg class="r" style="left:394.3px;top:452px" width="8" height="5"><path d="M0.5 0.4 L6 0.4 L3.25 4 Z" fill="#111"/></svg>
<div class="t" style="left:347.90px;top:449.34px;font-family:'Liberation Mono',monospace;font-size:11px;color:#222;transform:scaleX(0.7879);transform-origin:0 0;">Maximum</div>
<div class="t" style="left:435.60px;top:449.34px;font-family:'Liberation Mono',monospace;font-size:11px;color:#2a2a2a;transform:scaleX(0.7879);transform-origin:0 0;">Kopien:</div>
<div class="r" style="left:472px;top:444px;width:77px;height:20px;background:#fff;box-sizing:border-box;border:1px solid #dcdcdc;border-radius:2px;"></div>
<div class="t" style="left:477.00px;top:449.34px;font-family:'Liberation Mono',monospace;font-size:11px;color:#222;transform:scaleX(0.7879);transform-origin:0 0;">1</div>
<svg class="r" style="left:535px;top:447px" width="10" height="14"><path d="M1.8 6 L5.3 2.3 L8.8 6 Z" fill="#3a3a3a"/><path d="M1.8 8.4 L5.3 11.8 L8.8 8.4 Z" fill="#a0a0a0"/></svg>
<div class="t" style="left:573.50px;top:449.34px;font-family:'Liberation Mono',monospace;font-size:11px;color:#2a2a2a;transform:scaleX(0.7879);transform-origin:0 0;">Zielgröße:</div>
<div class="r" style="left:625.5px;top:444.5px;width:70px;height:20px;background:#fff;box-sizing:border-box;border:1px solid #dcdcdc;border-radius:2px;"></div>
<svg class="r" style="left:686.3px;top:452px" width="8" height="5"><path d="M0.5 0.4 L6 0.4 L3.25 4 Z" fill="#111"/></svg>
<div class="t" style="left:627.80px;top:449.34px;font-family:'Liberation Mono',monospace;font-size:11px;color:#222;transform:scaleX(0.7879);transform-origin:0 0;">D5(4.35G)</div>
<div class="r" style="left:707.5px;top:402px;width:81px;height:38.5px;background:#1483a0;border-radius:3px;"></div>
<svg class="r" style="left:714px;top:416px" width="13" height="10"><rect x="1.6" y="4.6" width="1.6" height="1.6" fill="#eef6f8"/><rect x="4.2" y="4.6" width="1.6" height="1.6" fill="#eef6f8"/><path d="M7.2 2.6 L10.4 5.4 L7.2 8.2" fill="none" stroke="#eef6f8" stroke-width="1.3"/></svg>
<div class="t" style="left:728.00px;top:414.42px;font-family:'Liberation Serif',sans-serif;font-size:13px;color:#f4f8fa;font-weight:700;letter-spacing:1.287px;">Nächste</div>
<div class="r" style="left:117px;top:475px;width:672px;height:20px;background:#ffffff;box-sizing:border-box;border:1px solid #4e585b;"></div>
<div class="r" style="left:118px;top:476px;width:292.6px;height:18px;background:#6cd3ee;"></div>
<div class="r" style="left:410.6px;top:476px;width:189.2px;height:18px;background:#fff75f;"></div>
<svg class="r" style="left:117px;top:475px" width="672" height="20"><rect x="34.25" y="1" width="1" height="4" fill="#3a4448"/><rect x="67.70" y="1" width="1" height="5" fill="#3a4448"/><rect x="101.15" y="1" width="1" height="4" fill="#3a4448"/><rect x="134.60" y="1" width="1" height="5" fill="#3a4448"/><rect x="168.05" y="1" width="1" height="4" fill="#3a4448"/><rect x="201.50" y="1" width="1" height="5" fill="#3a4448"/><rect x="234.95" y="1" width="1" height="4" fill="#3a4448"/><rect x="268.40" y="1" width="1" height="5" fill="#3a4448"/><rect x="301.85" y="1" width="1" height="4" fill="#3a4448"/><rect x="335.30" y="1" width="1" height="5" fill="#3a4448"/><rect x="368.75" y="1" width="1" height="4" fill="#3a4448"/><rect x="402.20" y="1" width="1" height="5" fill="#3a4448"/><rect x="435.65" y="1" width="1" height="4" fill="#3a4448"/><rect x="469.10" y="1" width="1" height="5" fill="#3a4448"/><rect x="502.55" y="1" width="1" height="4" fill="#3a4448"/><rect x="536.00" y="1" width="1" height="5" fill="#3a4448"/><rect x="569.45" y="1" width="1" height="4" fill="#3a4448"/><rect x="602.90" y="1" width="1" height="5" fill="#3a4448"/><rect x="636.35" y="1" width="1" height="4" fill="#3a4448"/></svg>
<div class="t" style="left:179.20px;top:486.06px;font-family:'Liberation Mono',monospace;font-size:7.5px;color:#222;transform:scaleX(0.8889);transform-origin:0 0;">1GB</div>
<div class="t" style="left:246.10px;top:486.06px;font-family:'Liberation Mono',monospace;font-size:7.5px;color:#222;transform:scaleX(0.8889);transform-origin:0 0;">2GB</div>
<div class="t" style="left:313.00px;top:486.06px;font-family:'Liberation Mono',monospace;font-size:7.5px;color:#222;transform:scaleX(0.8889);transform-origin:0 0;">3GB</div>
<div class="t" style="left:379.90px;top:486.06px;font-family:'Liberation Mono',monospace;font-size:7.5px;color:#222;transform:scaleX(0.8889);transform-origin:0 0;">4GB</div>
<div class="t" style="left:446.80px;top:486.06px;font-family:'Liberation Mono',monospace;font-size:7.5px;color:#222;transform:scaleX(0.8889);transform-origin:0 0;">5GB</div>
<div class="t" style="left:513.70px;top:486.06px;font-family:'Liberation Mono',monospace;font-size:7.5px;color:#222;transform:scaleX(0.8889);transform-origin:0 0;">6GB</div>
<div class="t" style="left:580.60px;top:486.06px;font-family:'Liberation Mono',monospace;font-size:7.5px;color:#222;transform:scaleX(0.8889);transform-origin:0 0;">7GB</div>
<div class="t" style="left:647.50px;top:486.06px;font-family:'Liberation Mono',monospace;font-size:7.5px;color:#222;transform:scaleX(0.8889);transform-origin:0 0;">8GB</div>
<div class="t" style="left:714.40px;top:486.06px;font-family:'Liberation Mono',monospace;font-size:7.5px;color:#222;transform:scaleX(0.8889);transform-origin:0 0;">9GB</div>
</body></html>
